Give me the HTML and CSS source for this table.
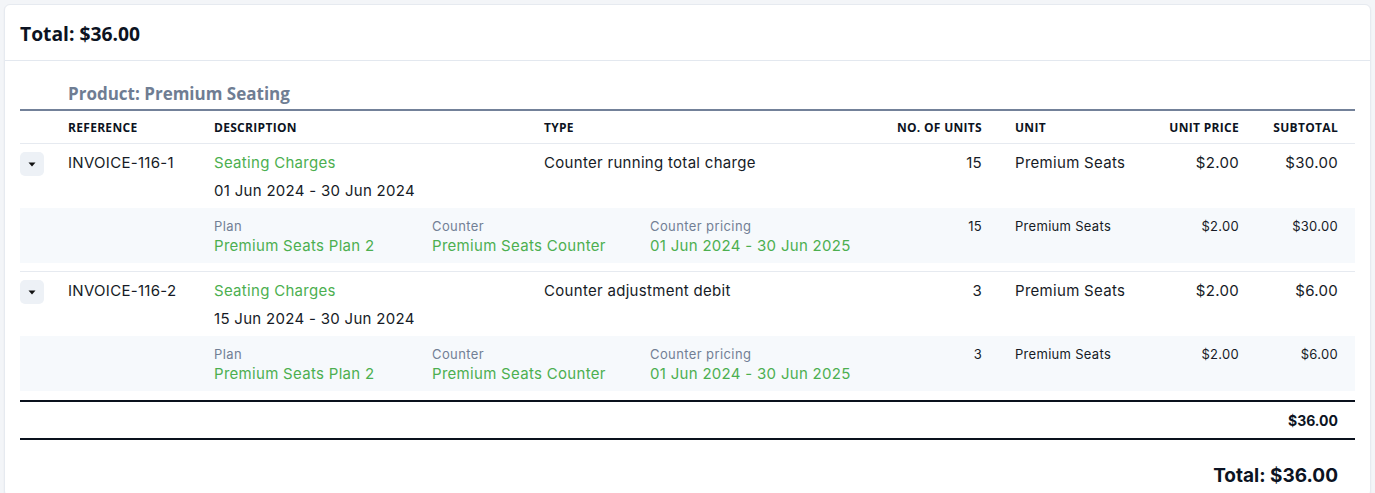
FILE: index.html
```html
<!DOCTYPE html>
<html>
<head>
<meta charset="utf-8">
<link rel="stylesheet" href="styles.css">
</head>
<body>
<div class="card">
  <div class="card-head">Total: $36.00</div>
  <div class="card-body">
    <div class="product-title">Product: Premium Seating</div>
    <div class="tbl">
      <div class="row head">
        <div></div>
        <div>Reference</div>
        <div>Description</div>
        <div>Type</div>
        <div class="r">No. of units</div>
        <div class="unit">Unit</div>
        <div class="r">Unit price</div>
        <div class="r">Subtotal</div>
      </div>

      <div class="group first">
        <div class="row main">
          <div><button class="toggle"><svg width="8" height="5" viewBox="0 0 8 5"><path d="M0.5 0.5h7L4 4.5z" fill="#111"/></svg></button></div>
          <div>INVOICE-116-1</div>
          <div><div class="green">Seating Charges</div><div>01 Jun 2024 - 30 Jun 2024</div></div>
          <div>Counter running total charge</div>
          <div class="r">15</div>
          <div class="unit">Premium Seats</div>
          <div class="r">$2.00</div>
          <div class="r">$30.00</div>
        </div>
        <div class="row sub">
          <div></div>
          <div></div>
          <div class="details">
            <div class="detail"><div class="label">Plan</div><div class="green">Premium Seats Plan 2</div></div>
            <div class="detail"><div class="label">Counter</div><div class="green">Premium Seats Counter</div></div>
            <div class="detail"><div class="label">Counter pricing</div><div class="green">01 Jun 2024 - 30 Jun 2025</div></div>
          </div>
          <div class="r">15</div>
          <div class="unit">Premium Seats</div>
          <div class="r">$2.00</div>
          <div class="r">$30.00</div>
        </div>
      </div>

      <div class="group last">
        <div class="row main">
          <div><button class="toggle"><svg width="8" height="5" viewBox="0 0 8 5"><path d="M0.5 0.5h7L4 4.5z" fill="#111"/></svg></button></div>
          <div>INVOICE-116-2</div>
          <div><div class="green">Seating Charges</div><div>15 Jun 2024 - 30 Jun 2024</div></div>
          <div>Counter adjustment debit</div>
          <div class="r">3</div>
          <div class="unit">Premium Seats</div>
          <div class="r">$2.00</div>
          <div class="r">$6.00</div>
        </div>
        <div class="row sub">
          <div></div>
          <div></div>
          <div class="details">
            <div class="detail"><div class="label">Plan</div><div class="green">Premium Seats Plan 2</div></div>
            <div class="detail"><div class="label">Counter</div><div class="green">Premium Seats Counter</div></div>
            <div class="detail"><div class="label">Counter pricing</div><div class="green">01 Jun 2024 - 30 Jun 2025</div></div>
          </div>
          <div class="r">3</div>
          <div class="unit">Premium Seats</div>
          <div class="r">$2.00</div>
          <div class="r">$6.00</div>
        </div>
      </div>

      <div class="sum-row">$36.00</div>
      <div class="grand">Total: $36.00</div>
    </div>
  </div>
</div>
</body>
</html>
```
FILE: styles.css
```css
* { box-sizing: border-box; }
html, body { margin: 0; padding: 0; }
body {
  background: #f3f5f8;
  padding: 4px;
  font-family: "Inter", "DejaVu Sans", sans-serif;
  color: #161b26;
}
.card {
  background: #fff;
  border: 1px solid #e6eaf0;
  border-radius: 6px;
  box-shadow: 0 1px 2px rgba(20, 30, 50, 0.05);
  overflow: hidden;
}
.card-head {
  font-family: "Open Sans", "Liberation Sans", sans-serif;
  font-weight: 700;
  font-size: 19.3px;
  line-height: 24px;
  color: #0c1322;
  padding: 17px 15px 14px;
  border-bottom: 1px solid #e3e8ef;
}
.card-body {
  padding: 0 15px 8px;
}
.product-title {
  font-family: "Open Sans", "Liberation Sans", sans-serif;
  font-weight: 700;
  font-size: 17px;
  line-height: 24px;
  color: #6f7d93;
  padding: 21px 0 3px 48px;
  border-bottom: 2px solid #738199;
}
.row {
  display: grid;
  grid-template-columns: 48px 146px 330px 346px 92px 158px 99px 99px 17px;
}
.r { text-align: right; }
.unit { padding-left: 33px; }
.head {
  height: 33px;
  align-items: center;
  font-family: "Open Sans", "Liberation Sans", sans-serif;
  font-weight: 700;
  font-size: 12px;
  letter-spacing: 0.3px;
  text-transform: uppercase;
  color: #0c1322;
  border-bottom: 1px solid #e6eaf0;
}
.group {
  padding-bottom: 8px;
  border-top: 1px solid #e6eaf0;
}
.group.first { border-top: none; }
.group.last { padding-bottom: 9px; }
.main {
  font-size: 15px;
  line-height: 28px;
  letter-spacing: 0.3px;
  padding: 5px 0 3px;
}
.toggle {
  width: 24px;
  height: 24px;
  border: none;
  border-radius: 5px;
  background: #edf1f6;
  padding: 0;
  margin-top: 3px;
  display: flex;
  align-items: center;
  justify-content: center;
}
.toggle svg { display: block; }
.green { color: #4caf50; }
.sub {
  background: #f6f9fc;
  font-size: 13px;
  line-height: 20px;
  letter-spacing: 0.3px;
  padding: 8px 0 7px;
}
.details {
  grid-column: 3 / span 2;
  display: flex;
}
.detail {
  width: 218px;
}
.detail .green { font-size: 15px; }
.label { color: #727f95; letter-spacing: 0.4px; }
.sum-row {
  border-top: 2px solid #0a111d;
  border-bottom: 2px solid #0a111d;
  height: 40px;
  display: flex;
  align-items: center;
  justify-content: flex-end;
  padding-right: 17px;
  font-weight: 700;
  font-size: 14px;
  color: #0c1322;
}
.grand {
  text-align: right;
  padding: 24px 17px 0 0;
  font-weight: 700;
  font-size: 19px;
  line-height: 24px;
  color: #0c1322;
}
```
